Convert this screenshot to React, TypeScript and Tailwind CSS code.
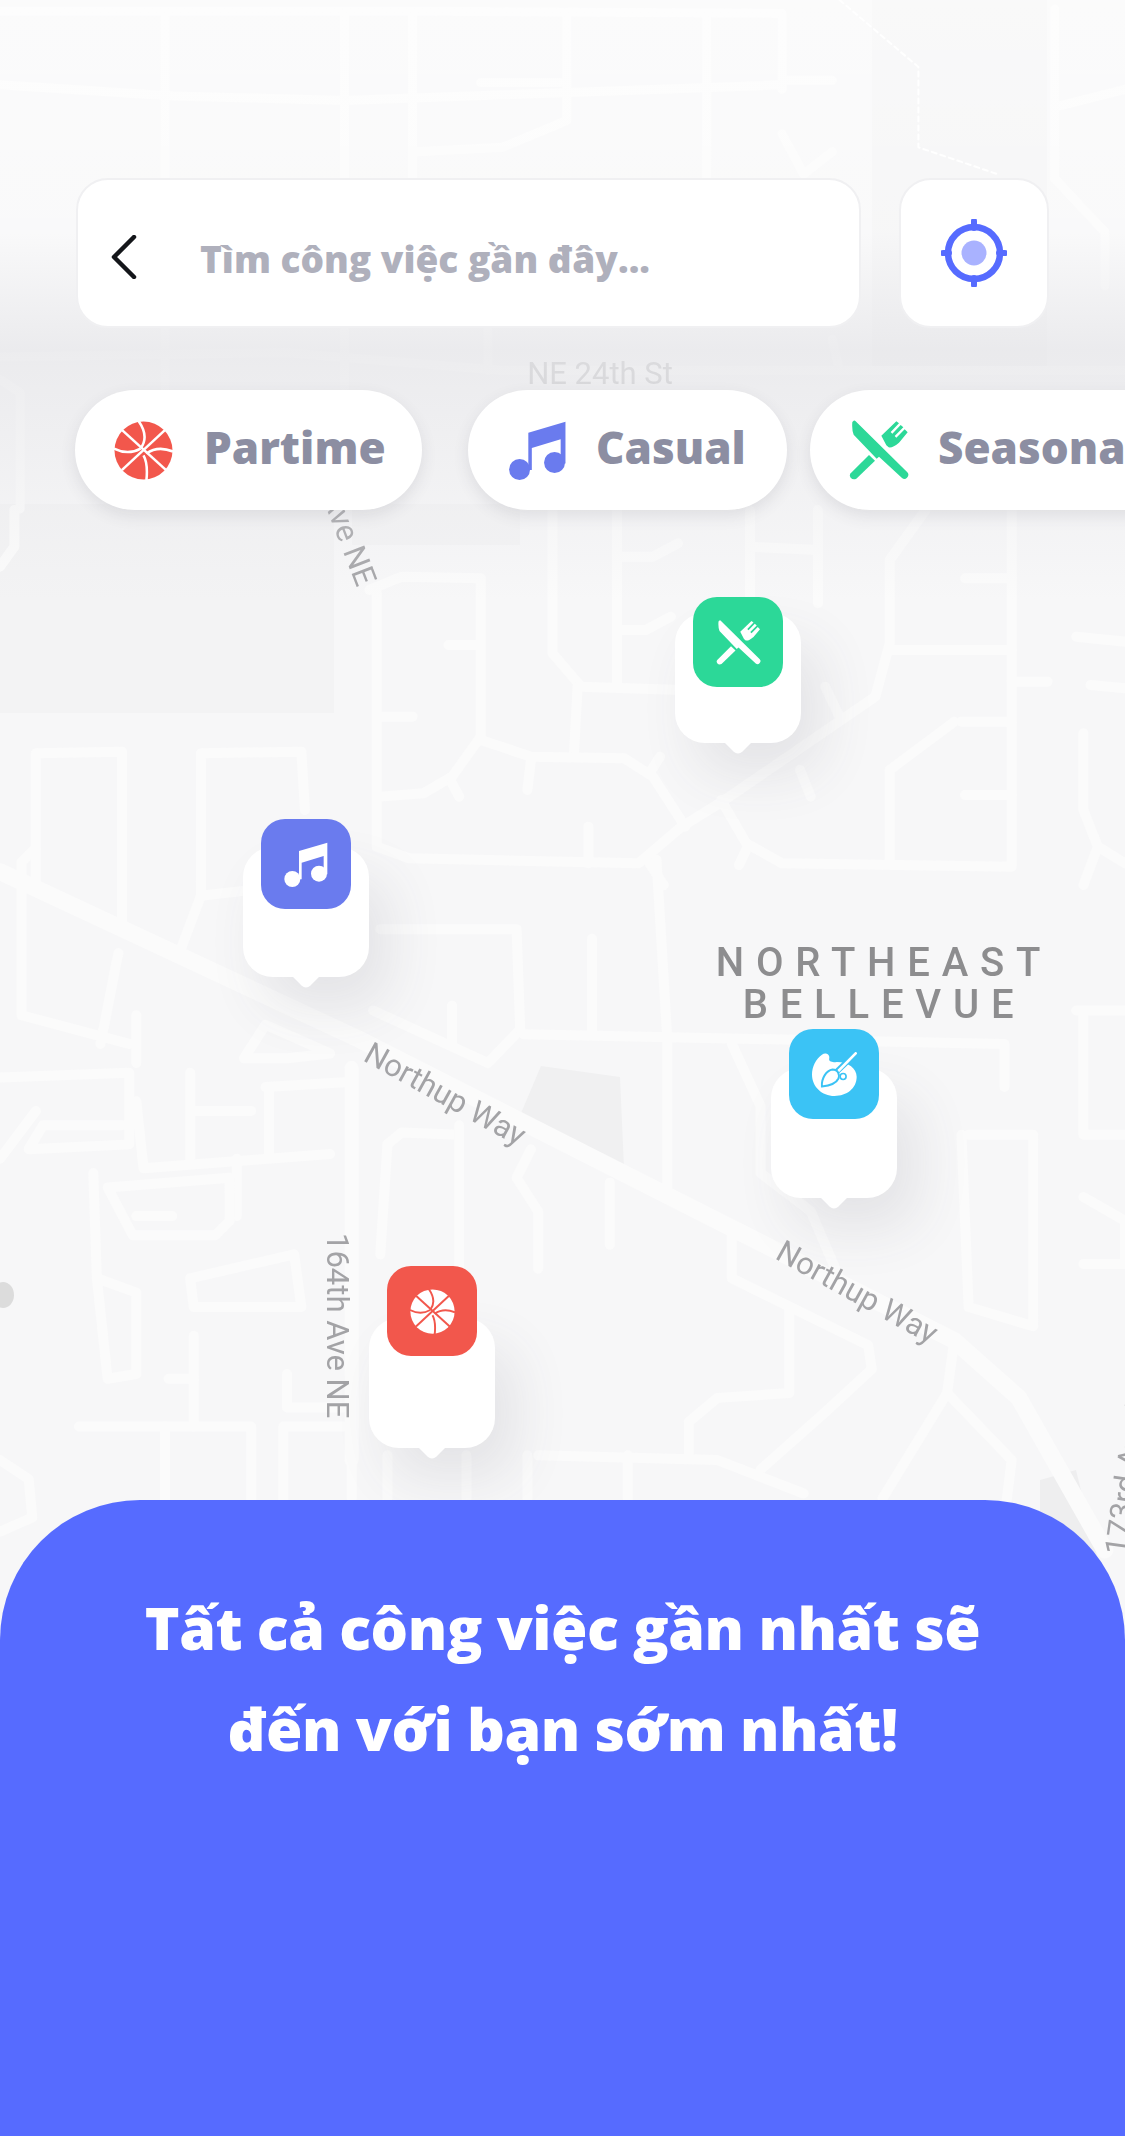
const upperRoads = [
  "0,25 600,25 1090,30 1090,200",
  "0,190 240,215 480,225 1090,190",
  "230,30 230,870",
  "480,30 480,400",
  "480,740 480,870",
  "575,30 575,400",
  "790,30 790,270 700,330 580,340",
  "670,185 780,185",
  "985,30 985,400",
  "1090,180 1160,180",
  "1090,300 1120,390 1160,340",
  "1470,240 1568,200",
  "1470,400 1540,520 1540,640",
  "1470,20 1470,400",
  "0,800 400,790 700,830 1568,830",
  "680,740 680,830",
  "1160,760 1170,830",
  "0,850 28,880 28,1140",
];

const middleRoads = [
  "515,240 560,200 670,205 670,680 630,800 590,850 530,860",
  "525,250 525,1010 570,1045 890,1060 950,950 1010,870 1220,560 1240,400 1240,150 1290,0",
  "770,0 770,430 810,530 950,540",
  "805,530 800,730",
  "860,0 860,520",
  "860,140 910,140 945,100",
  "860,360 900,360 935,320",
  "1045,0 1045,260",
  "1045,110 1140,120",
  "1140,0 1140,280",
  "1150,530 1170,620",
  "1240,420 1410,420",
  "1410,0 1410,1070 1090,1060 1040,1000 1005,870",
  "1345,205 1410,205",
  "1340,635 1410,635",
  "1240,780 1330,635",
  "1240,780 1240,1060",
  "1345,855 1410,855",
  "1410,515 1460,515",
  "1500,380 1568,395",
  "1520,525 1568,535",
  "1510,670 1510,900 1530,1010 1510,1125",
  "1530,1010 1568,1060",
  "625,405 670,405",
  "530,620 575,620",
  "670,690 740,740 870,745 910,800 955,950",
  "740,750 735,840",
  "920,740 905,790",
  "1115,780 1130,860",
  "820,950 820,1060",
  "630,820 640,860",
  "50,1125 50,730 170,725 170,1125",
  "280,1125 280,730 420,725 425,900",
  "20,0 20,110 0,170",
  "905,1060 925,1125",
  "1040,1020 1030,1065",
];

const lowerRoads = [
  "915,125 930,500 930,810",
  "730,490 1400,510 1400,600",
  "725,480 680,550 520,440",
  "530,270 720,270 725,480",
  "825,290 825,480",
  "630,430 630,510",
  "1020,510 1060,640 1060,780 1130,860 1170,1000",
  "1350,700 1440,700 1440,1100 1350,1060 1340,700",
  "1500,440 1568,440",
  "1510,450 1510,700 1568,700",
  "1510,830 1568,880 1568,970 1510,970",
  "0,580 180,570 180,720 40,730 60,680 170,680",
  "0,750 50,650",
  "50,100 30,130 30,450 180,510",
  "190,450 190,550",
  "165,320 140,510",
  "250,320 280,200 340,190",
  "280,200 280,170",
  "170,170 170,260",
  "190,630 200,770 460,740",
  "265,570 265,750",
  "370,600 480,590",
  "375,600 375,740",
  "270,650 350,650",
  "330,750 330,870",
  "340,540 370,470 460,530 400,540 340,540",
  "130,780 135,1000 190,1030 190,1200 150,1210 135,1000",
  "150,810 320,790 320,880 300,910 185,910 150,810",
  "190,870 240,870",
  "265,1000 410,950 420,1060 270,1060 265,1000",
  "110,1310 350,1310 350,1480",
  "230,1310 230,1568",
  "270,1120 270,1310",
  "235,1210 270,1210",
  "400,1200 400,1270 480,1270",
  "395,1480 395,1310 480,1310",
  "540,720 530,950",
  "540,720 560,695 640,700",
  "640,680 640,1020",
  "740,730 720,790 750,860 750,980",
  "850,800 850,930",
  "1020,900 1020,1000 1210,1140 1215,1190 1150,1280 1060,1400",
  "750,1370 1000,1380 1120,1450",
  "1100,1060 1100,1240 1000,1250 960,1300 960,1370",
  "1330,1130 1320,1240 1230,1460",
  "1320,1240 1410,1380 1400,1500",
  "0,1380 40,1420 45,1500 0,1530",
  "490,1380 490,1460",
  "540,1370 540,1460",
  "650,1370 650,1460",
  "735,1370 735,1460",
  "875,1370 875,1460",
];

// the map is a drawing, so it is all one svg under the page
function MapBackground() {
  return (
    <svg className="absolute inset-0 blur-[0.6px]" width="1125" height="2136" viewBox="0 0 1125 2136">
      <rect width="1125" height="2136" fill="#f7f7f8" />
      <rect x="872" y="0" width="175" height="370" fill="#f3f3f4" />
      <rect x="0" y="504" width="334" height="209" fill="#f3f3f4" />
      <rect x="352" y="504" width="168" height="41" fill="#f3f3f4" />
      <polygon points="541,1066 620,1077 624,1168 534,1130 516,1125" fill="#f0f0f1" />
      <polygon points="1040,1480 1076,1470 1098,1560 1040,1560" fill="#eeeeef" />
      <ellipse cx="3" cy="1295" rx="11" ry="13" fill="#dcdcdc" />
      <g
        transform="scale(0.7175 0.4464)"
        fill="none"
        stroke="#fbfbfb"
        strokeWidth="9"
        strokeLinejoin="round"
        strokeLinecap="round"
      >
        {upperRoads.map((points) => (
          <polyline key={points} points={points} vectorEffect="non-scaling-stroke" />
        ))}
        <polyline
          points="1170,0 1280,150 1280,330 1390,390"
          stroke="#ffffff"
          strokeWidth="2"
          strokeDasharray="5 4"
          vectorEffect="non-scaling-stroke"
        />
      </g>
      <g
        transform="translate(0 510) scale(0.7175 0.3333)"
        fill="none"
        stroke="#fbfbfb"
        strokeWidth="10"
        strokeLinejoin="round"
        strokeLinecap="round"
      >
        {middleRoads.map((points) => (
          <polyline key={points} points={points} vectorEffect="non-scaling-stroke" />
        ))}
      </g>
      <g
        transform="translate(0 800) scale(0.7175 0.4783)"
        fill="none"
        stroke="#fbfbfb"
        strokeWidth="10"
        strokeLinejoin="round"
        strokeLinecap="round"
      >
        {lowerRoads.map((points) => (
          <polyline key={points} points={points} vectorEffect="non-scaling-stroke" />
        ))}
        <polyline
          points="0,150 500,500 1000,880 1330,1130 1420,1250 1540,1568"
          strokeWidth="17"
          vectorEffect="non-scaling-stroke"
        />
        <polyline points="490,560 490,1380" strokeWidth="14" vectorEffect="non-scaling-stroke" />
      </g>
      <g fontFamily="Roboto, sans-serif" fill="#a3a3a6">
        <text x="600" y="384" textAnchor="middle" fontSize="31" fill="#c4c4c6">
          NE 24th St
        </text>
        <text x="357" y="588" textAnchor="end" fontSize="31" transform="rotate(69 357 588)">
          Ave NE
        </text>
        <text x="327" y="1233" fontSize="31" transform="rotate(90 327 1233)">
          164th Ave NE
        </text>
        <text x="362" y="1060" fontSize="31" transform="rotate(29 362 1060)">
          Northup Way
        </text>
        <text x="774" y="1258" fontSize="31" transform="rotate(29 774 1258)">
          Northup Way
        </text>
        <text x="1126" y="1556" fontSize="31" transform="rotate(-82 1126 1556)">
          173rd Ave NE
        </text>
        <text x="884" y="976" textAnchor="middle" fontSize="40" fontWeight="500" letterSpacing="11.8" fill="#8d8d8f">
          NORTHEAST
        </text>
        <text x="884" y="1018" textAnchor="middle" fontSize="40" fontWeight="500" letterSpacing="11.8" fill="#8d8d8f">
          BELLEVUE
        </text>
      </g>
    </svg>
  );
}

function BallIcon({ fill, line, className }: { fill: string; line: string; className: string }) {
  return (
    <svg viewBox="0 0 60 60" className={className}>
      <circle cx="30" cy="30" r="29.5" fill={fill} />
      <g fill="none" stroke={line} strokeWidth="2.6" strokeLinecap="butt">
        <path d="M8 9 L53 50" />
        <path d="M52 9 L8 50" />
        <path d="M25 0 C32 10 33 20 27 28" />
        <path d="M0 28 C10 33 20 32 27 28" />
        <path d="M30 35 C34 42 34 50 33 60" />
        <path d="M33 33 C40 28 50 27 60 31" />
      </g>
    </svg>
  );
}

function MusicIcon({ fill, className }: { fill: string; className: string }) {
  return (
    <svg viewBox="0 0 130 135" className={className} fill={fill}>
      <circle cx="24" cy="111" r="24" />
      <circle cx="104" cy="95" r="24" />
      <path d="M44 27 L129 2 L129 97 L118 97 L118 42 L52 62 L52 112 L44 112 Z" />
    </svg>
  );
}

function CutleryIcon({ fill, className }: { fill: string; className: string }) {
  return (
    <svg viewBox="0 0 180 180" className={className} fill={fill}>
      <path d="M14 2 Q17 0 20 4 L175 157 Q182 165 174 173 Q167 180 159 174 L90 110 L83 116 L14 44 Q8 30 10 6 Z" />
      <path d="M5 160 L60 105 L78 122 L22 176 Q12 181 5 173 Q0 166 5 160 Z" />
      <path d="M97 47 L142 4 L150 10 L125 36 L130 41 L155 15 L163 22 L137 48 L142 53 L167 28 L176 37 L150 68 Q130 85 119 82 L112 76 Z" />
    </svg>
  );
}

function PaletteIcon({ className }: { className: string }) {
  return (
    <svg viewBox="0 0 136 136" className={className}>
      <path
        fill="#ffffff"
        d="M30 8 C42 0 55 8 52 20 C50 30 62 32 75 30 C110 30 135 50 135 75 C135 110 105 133 68 133 C30 133 0 105 0 68 C0 45 12 20 30 8 Z"
      />
      <path d="M125 11 L72 62" stroke="#3bc3f5" strokeWidth="17" />
      <path d="M132 4 L75 62" stroke="#ffffff" strokeWidth="8" strokeLinecap="round" />
      <path
        d="M30 104 C28 80 43 56 62 53 C80 53 84 70 80 80 C72 97 50 102 30 104 Z"
        fill="#ffffff"
        stroke="#3bc3f5"
        strokeWidth="6"
      />
      <circle cx="94" cy="74" r="9" fill="#ffffff" stroke="#3bc3f5" strokeWidth="5" />
    </svg>
  );
}

type PinProps = {
  className: string;
  bodyClassName: string;
  color: string;
  children: React.ReactNode;
};

function MapPin({ className, bodyClassName, color, children }: PinProps) {
  return (
    <div className={`absolute w-[126px] ${className}`}>
      <div className={`absolute left-0 w-[126px] h-[130px] rounded-[30px] bg-white shadow-[20px_30px_55px_rgba(70,70,90,0.11)] ${bodyClassName}`}>
        <div className="absolute left-[51px] top-[114px] w-[24px] h-[24px] rotate-45 rounded-br-[6px] bg-white" />
      </div>
      <div
        className="absolute left-[18px] top-0 w-[90px] h-[90px] rounded-[24px] flex items-center justify-center"
        style={{ backgroundColor: color }}
      >
        {children}
      </div>
    </div>
  );
}

type ChipProps = {
  icon: React.ReactNode;
  label: string;
  className: string;
};

function CategoryChip({ icon, label, className }: ChipProps) {
  return (
    <div
      className={`h-[120px] shrink-0 rounded-full bg-white flex items-center shadow-[0_6px_16px_rgba(60,60,80,0.11)] ${className}`}
    >
      {icon}
      <span className="text-[44px] font-extrabold text-[#8c8ea2] leading-none whitespace-nowrap pb-[6px]">{label}</span>
    </div>
  );
}

export default function App() {
  return (
    <div className="relative w-[1125px] h-[2136px] overflow-hidden font-['Open_Sans',sans-serif]">
      <MapBackground />
      <div className="absolute inset-x-0 top-0 h-[600px] bg-[linear-gradient(to_bottom,rgba(255,255,255,0.5)_0,rgba(255,255,255,0.3)_230px,rgba(230,230,233,0.7)_350px,rgba(230,230,233,0)_600px)]" />

      <MapPin className="left-[675px] top-[597px]" bodyClassName="top-[16px]" color="#2cd898">
        <CutleryIcon fill="#ffffff" className="w-[45px] h-[45px]" />
      </MapPin>
      <MapPin className="left-[243px] top-[819px]" bodyClassName="top-[28px]" color="#6a7bee">
        <MusicIcon fill="#ffffff" className="w-[44px] h-[45px]" />
      </MapPin>
      <MapPin className="left-[771px] top-[1029px]" bodyClassName="top-[39px]" color="#3bc3f5">
        <PaletteIcon className="w-[45px] h-[45px]" />
      </MapPin>
      <MapPin className="left-[369px] top-[1266px]" bodyClassName="top-[52px]" color="#f2574c">
        <BallIcon fill="#ffffff" line="#f2574c" className="w-[45px] h-[45px]" />
      </MapPin>

      <div className="relative flex flex-col h-full pt-[178px]">
        <div className="flex pl-[76px] gap-[38px]">
          <div className="w-[785px] h-[150px] rounded-[32px] bg-white border-2 border-[#f0f0f2] flex items-center pl-[33px]">
            <svg viewBox="0 0 26 44" className="w-[26px] h-[44px] mt-[8px]" fill="none">
              <path d="M23 2 L3 22 L23 42" stroke="#14161a" strokeWidth="4.5" strokeLinecap="round" strokeLinejoin="round" />
            </svg>
            <span className="ml-[63px] mt-[10px] text-[37px] font-extrabold text-[#afb0bc] leading-none whitespace-nowrap">
              Tìm công việc gần đây...
            </span>
          </div>
          <div className="w-[150px] h-[150px] rounded-[32px] bg-white border-2 border-[#f0f0f2] flex items-center justify-center">
            <svg viewBox="0 0 66 68" className="w-[66px] h-[68px]" fill="none">
              <circle cx="33" cy="34" r="26" stroke="#566bff" strokeWidth="6.5" />
              <circle cx="33" cy="34" r="12.5" fill="#a9b2ff" />
              <path d="M33 2 V9 M33 59 V66 M2 34 H8 M58 34 H64" stroke="#566bff" strokeWidth="6" strokeLinecap="round" />
            </svg>
          </div>
        </div>

        <div className="flex pl-[75px] mt-[62px]">
          <CategoryChip
            className="w-[347px] pl-[39px]"
            label="Partime"
            icon={<BallIcon fill="#f2574c" line="#ffffff" className="w-[59px] h-[59px] mr-[31px]" />}
          />
          <CategoryChip
            className="w-[319px] ml-[46px] pl-[41px]"
            label="Casual"
            icon={<MusicIcon fill="#6a7bee" className="w-[57px] h-[59px] mr-[30px]" />}
          />
          <CategoryChip
            className="w-[400px] ml-[23px] pl-[39px]"
            label="Seasonal"
            icon={<CutleryIcon fill="#2cd898" className="w-[60px] h-[60px] mr-[29px]" />}
          />
        </div>

        <div className="mt-auto h-[636px] rounded-t-[140px] bg-[#566bff] pt-[77px]">
          <p className="text-center text-[59px] font-extrabold text-white leading-[101px] tracking-[-0.5px]">
            Tất cả công việc gần nhất sẽ
            <br />
            đến với bạn sớm nhất!
          </p>
        </div>
      </div>
    </div>
  );
}
